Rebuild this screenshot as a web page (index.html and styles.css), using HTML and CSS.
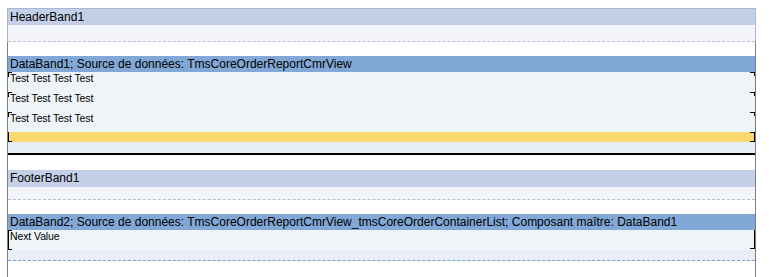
FILE: index.html
```html
<!DOCTYPE html>
<html lang="en">
<head>
    <meta charset="UTF-8">
    <title>Report designer</title>
    <link rel="stylesheet" href="styles.css">
</head>
<body>
    <div class="page">
        <div class="band header">
            <div class="band-title">HeaderBand1</div>
            <div class="band-body dashed"></div>
        </div>
        <div class="frame">
            <div class="gap"></div>
            <div class="band data">
                <div class="band-title">DataBand1; Source de données: TmsCoreOrderReportCmrView</div>
                <div class="row">Test Test Test Test</div>
                <div class="row">Test Test Test Test</div>
                <div class="row">Test Test Test Test</div>
                <div class="row yellow"></div>
                <div class="band-rest"></div>
            </div>
            <div class="separator"></div>
            <div class="gap tall"></div>
            <div class="band footer">
                <div class="band-title">FooterBand1</div>
                <div class="band-body dashed short"></div>
            </div>
            <div class="gap"></div>
            <div class="band data">
                <div class="band-title">DataBand2; Source de données: TmsCoreOrderReportCmrView_tmsCoreOrderContainerList; Composant maître: DataBand1</div>
                <div class="row last">Next Value</div>
                <div class="band-rest blue-dash"></div>
            </div>
            <div class="gap fill"></div>
        </div>
    </div>
</body>
</html>
```

FILE: styles.css
```css
body {
    margin: 0;
    background-color: #ffffff;
    font-family: "Liberation Sans", Arial, sans-serif;
    color: #000000;
}

.page {
    padding-top: 8px;
    margin-left: 7px;
    width: 749px;
}

.band-title {
    font-size: 12px;
    padding-left: 2px;
    white-space: nowrap;
    overflow: hidden;
}

.header {
    border-left: 1px solid #a9b6d3;
    border-right: 1px solid #a9b6d3;
}

.header .band-title,
.footer .band-title {
    height: 16px;
    line-height: 17px;
    background-color: #c4d0e7;
    border-top: 1px solid #a9b6d3;
}

.footer .band-title {
    height: 17px;
    border-top: none;
}

.band-body {
    height: 16px;
    background-color: #f3f5fa;
}

.band-body.short {
    height: 12px;
}

.dashed {
    border-bottom: 1px dashed #b8c1d4;
}

.frame {
    border-left: 1px solid #7f7f7f;
    border-right: 1px solid #7f7f7f;
}

.gap {
    height: 14px;
}

.gap.tall {
    height: 15px;
}

.gap.fill {
    height: 16px;
}

.data .band-title {
    height: 16px;
    line-height: 16px;
    background-color: #81a8d6;
}

.row {
    position: relative;
    height: 20px;
    padding-left: 2px;
    font-size: 10.5px;
    letter-spacing: -0.1px;
    line-height: 13px;
    background-color: #eff4f9;
}

.row::before {
    content: "";
    position: absolute;
    left: 0;
    top: 0;
    width: 3px;
    height: 4px;
    border-top: 1px solid #000000;
    border-left: 1px solid #000000;
}

.row::after {
    content: "";
    position: absolute;
    right: 0;
    top: 0;
    width: 4px;
    height: 3px;
    border-top: 1px solid #000000;
    border-right: 1px solid #000000;
}

.row.yellow {
    height: 10px;
    background-color: #fbd96f;
}

.row.yellow::before {
    top: auto;
    bottom: 0;
    height: 9px;
    border-top: none;
    border-bottom: 1px solid #000000;
}

.row.yellow::after {
    height: 8px;
    border-bottom: 1px solid #000000;
}

.row.last::before {
    height: 18px;
    border-bottom: 1px solid #000000;
}

.row.last::after {
    height: 18px;
    border-bottom: 1px solid #000000;
    border-top: none;
}

.band-rest {
    height: 11px;
    background-color: #e8eef7;
}

.band-rest.blue-dash {
    height: 10px;
    border-bottom: 1px dashed #7a9fd0;
}

.separator {
    height: 2px;
    background-color: #000000;
}
```
